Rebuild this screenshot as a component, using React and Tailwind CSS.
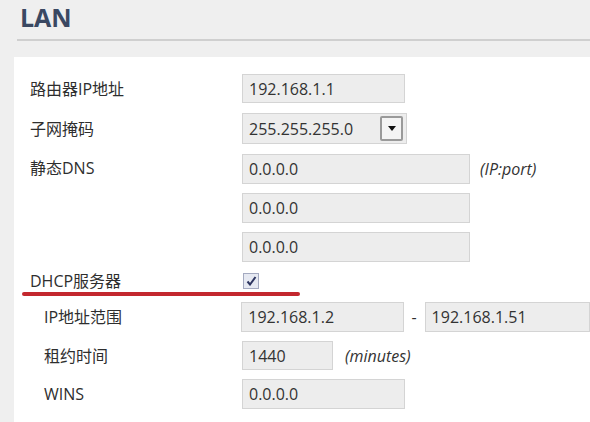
export default function App() {
  const sans = { fontFamily: '"Open Sans", "Noto Sans CJK SC", sans-serif' };
  const inputCls =
    "h-full flex items-center px-[6px] bg-[#ededed] border border-[#d4d4d4] text-[16px] text-[#333]";

  return (
    <div className="w-[590px] h-[422px] bg-[#efefef] overflow-hidden flex flex-col" style={sans}>
      {/* header */}
      <div className="h-[57px] pl-[17px] flex flex-col">
        <div className="pl-[3px] h-[39px] text-[25px] font-bold text-[#3a4862] leading-[34px]">LAN</div>
        <div className="h-[2px] bg-[#cfcfcf]" />
      </div>

      {/* panel */}
      <div className="flex-1 ml-[14px] bg-white pl-[16px] pt-[17px] text-[16px] text-[#2e2e2e]">
        <div className="flex h-[29px] items-center">
          <div className="w-[212px]">路由器IP地址</div>
          <div className={inputCls + " w-[163px]"}>192.168.1.1</div>
        </div>

        <div className="flex h-[31px] items-center mt-[10px]">
          <div className="w-[212px]">子网掩码</div>
          <div className={inputCls + " w-[165px] justify-between pr-[3px]"}>
            <span>255.255.255.0</span>
            <span className="w-[23px] h-[25px] border-2 border-[#9a9a9a] bg-[#f4f4f4] flex items-center justify-center rounded-[2px]">
              <svg width="8" height="5" viewBox="0 0 8 5">
                <path d="M0 0 H8 L4 5 Z" fill="#111" />
              </svg>
            </span>
          </div>
        </div>

        <div className="flex h-[30px] items-center mt-[10px]">
          <div className="w-[212px] self-start pt-[2px]">静态DNS</div>
          <div className={inputCls + " w-[228px]"}>0.0.0.0</div>
          <div className="ml-[10px] italic text-[#333]">(IP:port)</div>
        </div>
        <div className="flex h-[30px] items-center mt-[9px]">
          <div className="w-[212px]" />
          <div className={inputCls + " w-[228px]"}>0.0.0.0</div>
        </div>
        <div className="flex h-[30px] items-center mt-[9px]">
          <div className="w-[212px]" />
          <div className={inputCls + " w-[228px]"}>0.0.0.0</div>
        </div>

        <div className="flex h-[20px] items-center mt-[9px]">
          <div className="w-[213px]">DHCP服务器</div>
          <span className="w-[16px] h-[16px] border border-[#a4aac0] bg-[#e6e9f2] flex items-center justify-center">
            <svg width="11" height="10" viewBox="0 0 11 10">
              <path d="M1.5 5.5 L4 8.5 L9.5 1" stroke="#2d3560" strokeWidth="2" fill="none" />
            </svg>
          </span>
        </div>
        <div className="h-[4px] w-[278px] -ml-[8px] mt-[1px] bg-[#c3272e] rounded-full" />

        <div className="flex h-[30px] items-center mt-[6px]">
          <div className="w-[212px] pl-[14px]">IP地址范围</div>
          <div className={inputCls + " w-[163px]"}>192.168.1.2</div>
          <div className="w-[21px] text-center">-</div>
          <div className={inputCls + " w-[166px]"}>192.168.1.51</div>
        </div>

        <div className="flex h-[29px] items-center mt-[9px]">
          <div className="w-[212px] pl-[14px]">租约时间</div>
          <div className={inputCls + " w-[91px]"}>1440</div>
          <div className="ml-[12px] italic text-[#333]">(minutes)</div>
        </div>

        <div className="flex h-[30px] items-center mt-[9px]">
          <div className="w-[212px] pl-[14px]">WINS</div>
          <div className={inputCls + " w-[163px]"}>0.0.0.0</div>
        </div>
      </div>
    </div>
  );
}
